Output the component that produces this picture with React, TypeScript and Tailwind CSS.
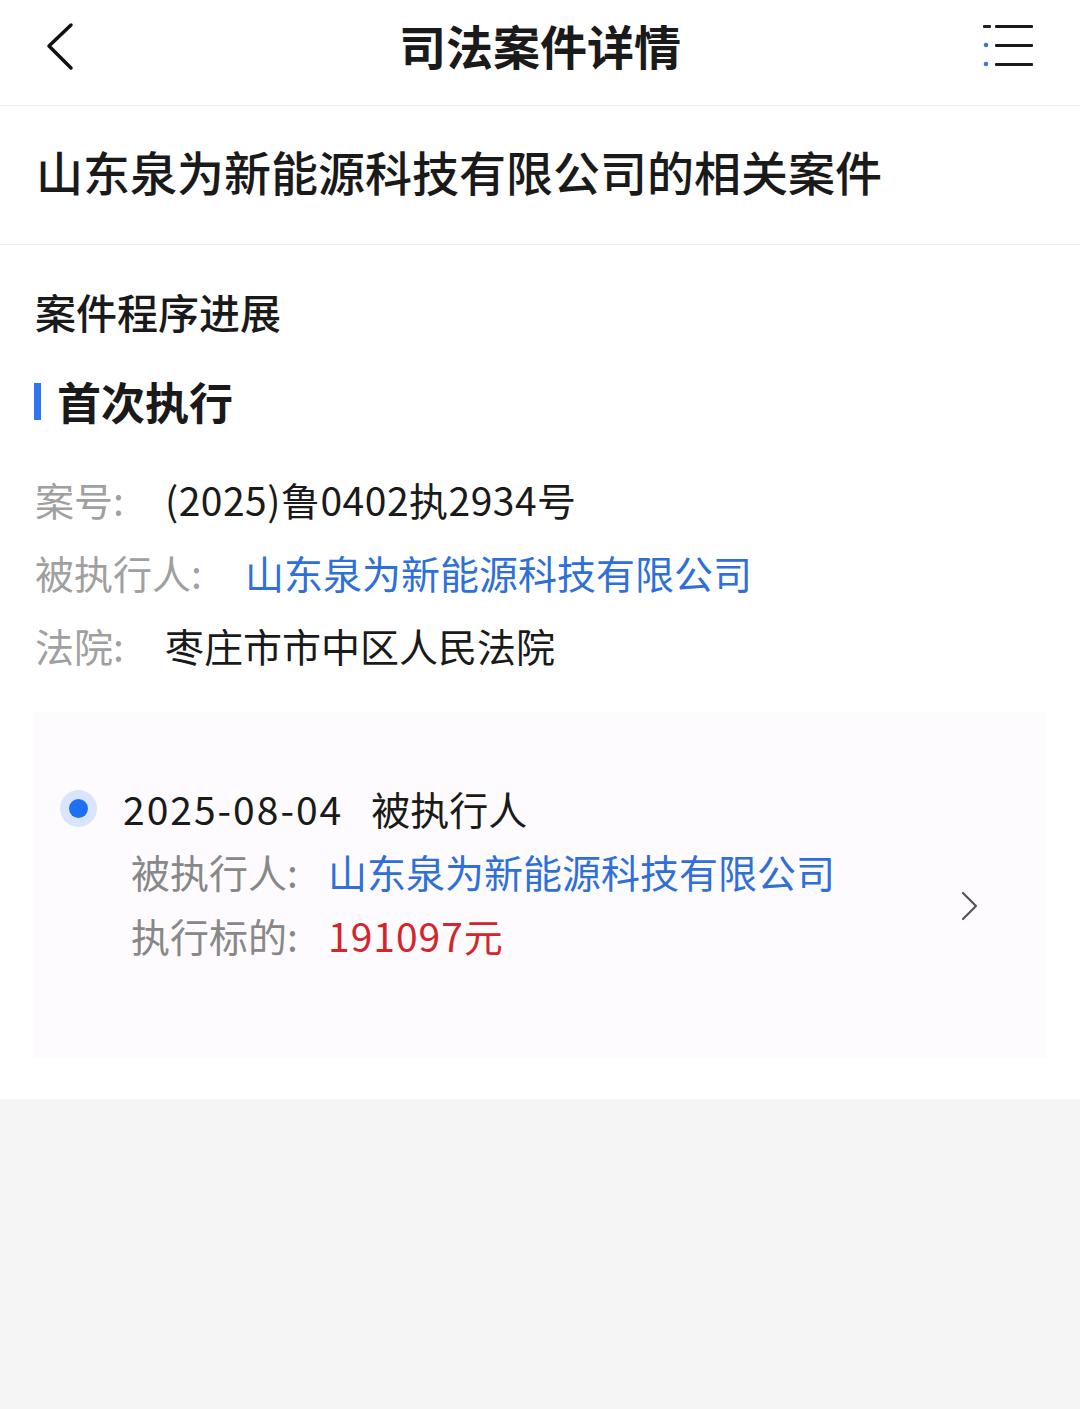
import React from "react";

const font = { fontFamily: '"Noto Sans CJK SC", "Noto Sans", sans-serif' };

const BackIcon = () => (
  <svg width="32" height="50" viewBox="0 0 32 50" className="ml-[44px]">
    <polyline points="27,3 5,24 27,46" fill="none" stroke="#111" strokeWidth="3.5" strokeLinecap="round" strokeLinejoin="round" />
  </svg>
);

const MenuIcon = () => (
  <svg width="54" height="48" viewBox="0 0 54 48" className="mr-[44px]">
    <rect x="1" y="3" width="8" height="3" rx="1" fill="#222" />
    <circle cx="4" cy="23" r="2.3" fill="#3a78e0" />
    <circle cx="4" cy="42" r="2.3" fill="#3a78e0" />
    <rect x="13" y="3" width="38" height="3" rx="1" fill="#1a1a1a" />
    <rect x="13" y="22" width="38" height="3" rx="1" fill="#1a1a1a" />
    <rect x="13" y="41" width="38" height="3" rx="1" fill="#1a1a1a" />
  </svg>
);

const InfoRow = ({ label, value, labelW, valueClass }: { label: string; value: string; labelW: string; valueClass: string }) => (
  <div className="flex h-[73px] items-center text-[39px] leading-[73px]">
    <span className={`${labelW} shrink-0 text-[#a0a0a0]`}>{label}</span>
    <span className={valueClass}>{value}</span>
  </div>
);

export default function App() {
  return (
    <div className="min-h-[1409px] w-[1080px] bg-[#f5f5f5]" style={font}>
      <div className="bg-white">
        <header className="flex h-[106px] items-start border-b border-[#ececec] pt-[22px]">
          <div className="w-[140px] shrink-0">
            <BackIcon />
          </div>
          <h1 className="flex-1 text-center text-[47px] font-bold leading-[46px] text-[#1a1a1a]">司法案件详情</h1>
          <div className="flex w-[140px] shrink-0 justify-end">
            <MenuIcon />
          </div>
        </header>

        <div className="flex h-[139px] items-center border-b border-[#ededed] pb-[7px] pl-[36px]">
          <h2 className="text-[47px] font-medium text-[#1a1a1a]">山东泉为新能源科技有限公司的相关案件</h2>
        </div>

        <section className="pb-[41px] pt-[37px]">
          <h3 className="px-[35px] text-[41px] font-medium leading-[58px] text-[#1a1a1a]">案件程序进展</h3>

          <div className="mt-[32px] flex h-[58px] items-center px-[34px]">
            <span className="h-[37px] w-[7px] bg-[#2f74f0]" />
            <span className="ml-[16px] text-[44px] font-semibold text-[#1a1a1a]">首次执行</span>
          </div>

          <div className="mt-[33px] px-[35px]">
            <InfoRow label="案号:" value="(2025)鲁0402执2934号" labelW="w-[130px]" valueClass="tracking-[0.5px] text-[#1a1a1a]" />
            <InfoRow label="被执行人:" value="山东泉为新能源科技有限公司" labelW="w-[210px]" valueClass="text-[#2f6fd9]" />
            <InfoRow label="法院:" value="枣庄市市中区人民法院" labelW="w-[130px]" valueClass="text-[#1a1a1a]" />
          </div>

          <div className="mx-[33px] mr-[34px] mt-[30px] flex h-[346px] bg-[#fdfbfd] pt-[64px]">
            <div className="flex flex-1 pl-[27px]">
              <div className="flex h-[64px] w-[37px] shrink-0 items-center">
                <div className="flex h-[37px] w-[37px] items-center justify-center rounded-full bg-[#d8e5fd]">
                  <div className="h-[19px] w-[19px] rounded-full bg-[#1f6ff5]" />
                </div>
              </div>
              <div className="ml-[26px] text-[39px]">
                <div className="flex h-[64px] items-center leading-[64px] text-[#1a1a1a]">
                  <span className="tracking-[2px]">2025-08-04</span>
                  <span className="ml-[28px]">被执行人</span>
                </div>
                <div className="ml-[8px] flex h-[63px] items-center leading-[63px]">
                  <span className="w-[197px] shrink-0 text-[#888]">被执行人:</span>
                  <span className="text-[#2f6fd9]">山东泉为新能源科技有限公司</span>
                </div>
                <div className="ml-[8px] flex h-[64px] items-center leading-[64px]">
                  <span className="w-[197px] shrink-0 text-[#888]">执行标的:</span>
                  <span className="tracking-[1px] text-[#d2262c]">191097元</span>
                </div>
              </div>
            </div>
            <div className="mr-[66px] mt-[114px] self-start">
              <svg width="20" height="32" viewBox="0 0 20 32">
                <polyline points="3,3 16,16 3,29" fill="none" stroke="#555" strokeWidth="2.2" strokeLinecap="round" strokeLinejoin="round" />
              </svg>
            </div>
          </div>
        </section>
      </div>
    </div>
  );
}
